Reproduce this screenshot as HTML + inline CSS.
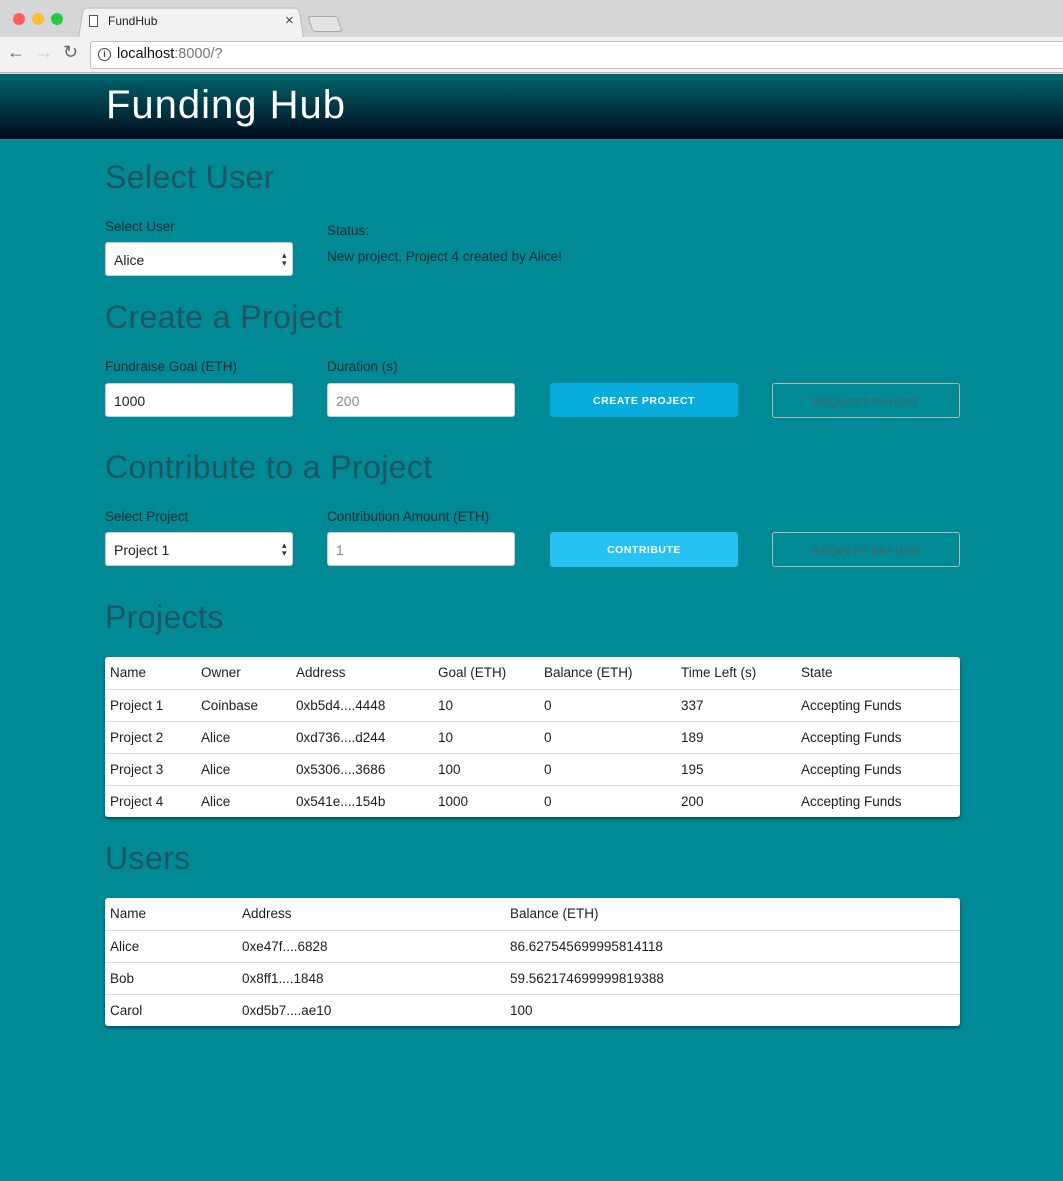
<!DOCTYPE html>
<html><head><meta charset="utf-8"><style>
*{margin:0;padding:0;box-sizing:border-box}
body{width:1063px;height:1181px;background:#008a96;font-family:"Liberation Sans",sans-serif;position:relative;overflow:hidden;color:#1d2b2e}
.a{position:absolute}
.chrome{left:0;top:0;width:1063px;height:74px;background:#dcdcdc}
.tabbar{left:0;top:0;width:1063px;height:37px;background:#d6d6d8}
.tab{left:78px;top:6px;width:226px;height:32px;background:#f2f2f2;border:1px solid #b9b9b9;border-bottom:none;border-radius:5px 5px 0 0;transform:perspective(100px) rotateX(8deg);transform-origin:bottom}
.toolbar{left:0;top:37px;width:1063px;height:36px;background:#f2f2f2;border-bottom:1px solid #b8b8b8}
.url{left:90px;top:41px;width:980px;height:28px;background:#fff;border:1px solid #c0c0c0;border-radius:3px}
.hdr{left:0;top:74px;width:1063px;height:65px;background:linear-gradient(#00666e,#000a1c)}
h1{position:absolute;left:106px;top:83px;font-size:40px;font-weight:normal;color:#fff;letter-spacing:1px}
h2{position:absolute;left:105px;font-size:32px;font-weight:normal;color:#1e5560;letter-spacing:0.4px}
.lbl{position:absolute;font-size:13.5px;color:#1d2b2e}
.inp{position:absolute;width:188px;height:34px;background:#fff;border:1px solid #ccc;border-radius:3px;font-size:14px;padding:9px 8px;color:#222}
.inp.ph{color:#888}
.sel:after{content:"▴▾";position:absolute;right:4px;top:8px;font-size:9px;line-height:8px;width:6px;word-break:break-all;color:#333}
.btn{position:absolute;width:188px;height:34px;border-radius:3px;font-size:10.5px;font-weight:bold;color:#fff;text-align:center;line-height:37px;letter-spacing:0.5px}
.btn2{position:absolute;width:188px;height:35px;border-radius:3px;border:1px solid #b5b5b5;font-size:10.5px;color:#5a5a5a;text-align:center;line-height:36px;letter-spacing:0.8px}
table{position:absolute;left:105px;width:855px;background:#fff;border-collapse:collapse;border-radius:3px;box-shadow:0 2px 3px rgba(0,0,0,.45);font-size:13.5px}
td{height:32px;padding-left:5px;border-top:1px solid #ddd;color:#1e1e1e;white-space:nowrap}
tr:first-child td{border-top:none}
</style></head><body>
<div class="a chrome"></div>
<div class="a tabbar"></div>
<div class="a" style="left:13px;top:13px;width:12px;height:12px;border-radius:50%;background:#fc5f57"></div>
<div class="a" style="left:32px;top:13px;width:12px;height:12px;border-radius:50%;background:#fdbc2e"></div>
<div class="a" style="left:51px;top:13px;width:12px;height:12px;border-radius:50%;background:#28c840"></div>
<div class="a tab"></div>
<div class="a" style="left:310px;top:16px;width:30px;height:16px;background:#e4e4e4;border:1px solid #aaa;border-radius:3px;transform:skewX(20deg)"></div>
<div class="a" style="left:89px;top:15px;width:9px;height:12px;border:1px solid #555;background:#fff"></div>
<div class="a" style="left:108px;top:14px;font-size:12px;color:#222">FundHub</div>
<div class="a" style="left:285px;top:12px;font-size:15px;color:#444">×</div>
<div class="a toolbar"></div>
<div class="a" style="left:7px;top:42px;font-size:18px;color:#666">←</div>
<div class="a" style="left:35px;top:42px;font-size:18px;color:#ccc">→</div>
<div class="a" style="left:63px;top:42px;font-size:18px;color:#666">↻</div>
<div class="a url"></div>
<div class="a" style="left:98px;top:48px;width:13px;height:13px;border:1.5px solid #444;border-radius:50%;font-size:9px;text-align:center;line-height:10px;font-weight:bold;color:#444">i</div>
<div class="a" style="left:117px;top:46px;font-size:14.5px;color:#111">localhost<span style="color:#777">:8000/?</span></div>
<div class="a hdr"></div>
<h1>Funding Hub</h1>

<h2 style="top:159px">Select User</h2>
<div class="lbl" style="left:105px;top:219px">Select User</div>
<div class="inp sel" style="left:105px;top:242px">Alice</div>
<div class="lbl" style="left:327px;top:223px">Status:</div>
<div class="lbl" style="left:327px;top:249px">New project, Project 4 created by Alice!</div>

<h2 style="top:299px">Create a Project</h2>
<div class="lbl" style="left:105px;top:359px">Fundraise Goal (ETH)</div>
<div class="lbl" style="left:327px;top:359px">Duration (s)</div>
<div class="inp" style="left:105px;top:383px">1000</div>
<div class="inp ph" style="left:327px;top:383px">200</div>
<div class="btn" style="left:550px;top:383px;background:#06acdc">CREATE PROJECT</div>
<div class="btn2" style="left:772px;top:383px">REQUEST PAYOUT</div>

<h2 style="top:449px">Contribute to a Project</h2>
<div class="lbl" style="left:105px;top:509px">Select Project</div>
<div class="lbl" style="left:327px;top:509px">Contribution Amount (ETH)</div>
<div class="inp sel" style="left:105px;top:532px">Project 1</div>
<div class="inp ph" style="left:327px;top:532px">1</div>
<div class="btn" style="left:550px;top:532px;height:35px;background:#25c2f2">CONTRIBUTE</div>
<div class="btn2" style="left:772px;top:532px">REQUEST REFUND</div>

<h2 style="top:599px">Projects</h2>
<table style="top:657px">
<colgroup><col style="width:91px"><col style="width:95px"><col style="width:142px"><col style="width:106px"><col style="width:137px"><col style="width:120px"><col></colgroup>
<tr><td>Name</td><td>Owner</td><td>Address</td><td>Goal (ETH)</td><td>Balance (ETH)</td><td>Time Left (s)</td><td>State</td></tr>
<tr><td>Project 1</td><td>Coinbase</td><td>0xb5d4....4448</td><td>10</td><td>0</td><td>337</td><td>Accepting Funds</td></tr>
<tr><td>Project 2</td><td>Alice</td><td>0xd736....d244</td><td>10</td><td>0</td><td>189</td><td>Accepting Funds</td></tr>
<tr><td>Project 3</td><td>Alice</td><td>0x5306....3686</td><td>100</td><td>0</td><td>195</td><td>Accepting Funds</td></tr>
<tr><td>Project 4</td><td>Alice</td><td>0x541e....154b</td><td>1000</td><td>0</td><td>200</td><td>Accepting Funds</td></tr>
</table>

<h2 style="top:840px">Users</h2>
<table style="top:898px">
<colgroup><col style="width:132px"><col style="width:268px"><col></colgroup>
<tr><td>Name</td><td>Address</td><td>Balance (ETH)</td></tr>
<tr><td>Alice</td><td>0xe47f....6828</td><td>86.627545699995814118</td></tr>
<tr><td>Bob</td><td>0x8ff1....1848</td><td>59.562174699999819388</td></tr>
<tr><td>Carol</td><td>0xd5b7....ae10</td><td>100</td></tr>
</table>
</body></html>
